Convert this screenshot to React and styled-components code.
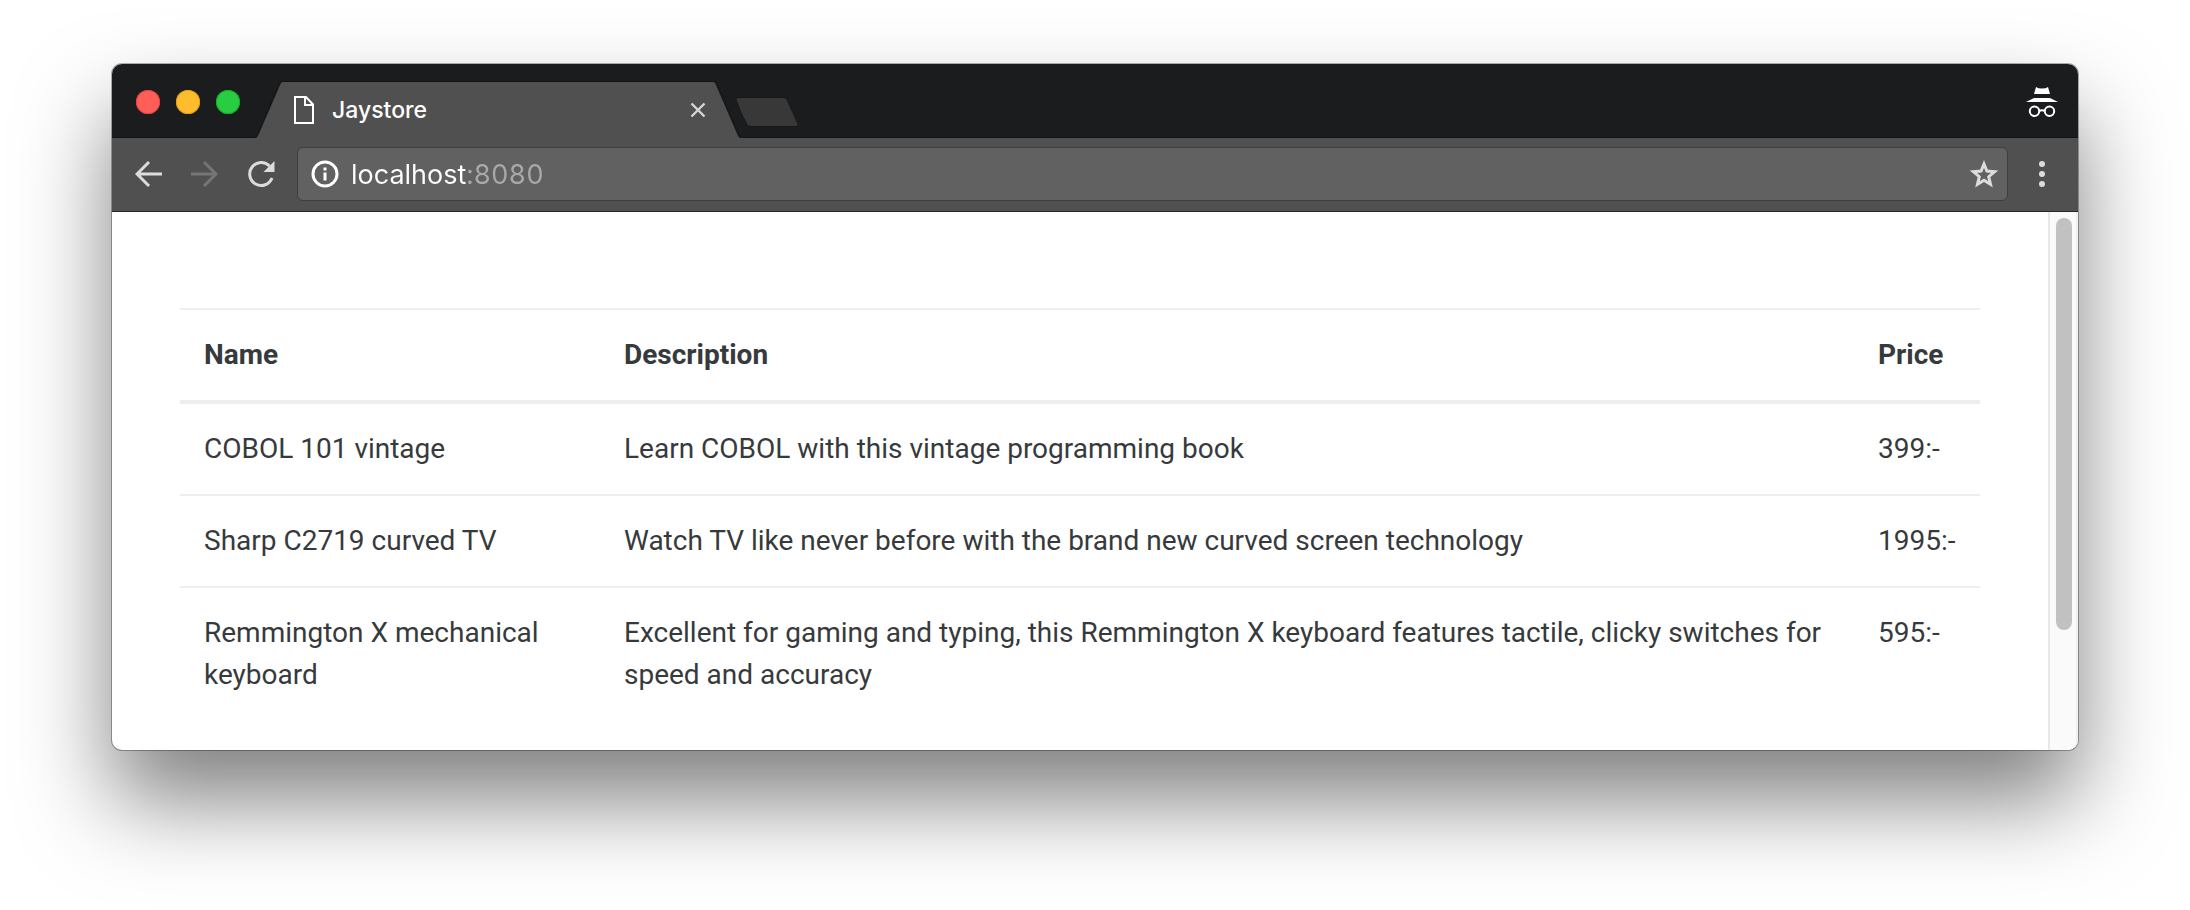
import React from "react";
import styled, { createGlobalStyle } from "styled-components";

const GlobalStyle = createGlobalStyle`
  * { box-sizing: border-box; }
  body { margin: 0; background: #fff; }
  button { border: 0; padding: 0; background: none; font: inherit; color: inherit; cursor: pointer; }
  svg { display: block; }
`;

const Desktop = styled.main`
  padding: 64px 112px 160px;
`;

const Window = styled.section`
  border-radius: 10px;
  background: #fff;
  box-shadow: 0 0 0 1px rgba(0, 0, 0, 0.3), 0 50px 90px rgba(0, 0, 0, 0.5);
`;

const TabStrip = styled.header`
  display: flex;
  align-items: flex-end;
  height: 74px;
  padding: 0 20px 0 24px;
  border-radius: 10px 10px 0 0;
  background: #1b1c1e;
  box-shadow: inset 0 -1px #141516;
`;

const WindowControls = styled.div`
  display: flex;
  align-self: flex-start;
  gap: 16px;
  margin: 26px 16px 0 0;
`;

const Light = styled.button`
  width: 24px;
  height: 24px;
  border-radius: 50%;
  background: ${(p) => p.$fill};
  box-shadow: inset 0 0 0 1px ${(p) => p.$edge};
`;

const Tab = styled.div`
  display: flex;
  flex: 0 1 484px;
  min-width: 0;
  height: 56px;
`;

const TabBody = styled.div`
  display: flex;
  flex: 1;
  align-items: center;
  min-width: 0;
  padding: 0 8px 0 12px;
  background: #505050;
  box-shadow: 0 -1px #141516;
`;

const TabTitle = styled.button`
  display: flex;
  flex: 1;
  align-items: center;
  gap: 18px;
  color: #fff;
  font-family: Inter, "Liberation Sans", sans-serif;
  font-size: 23px;
  font-weight: 500;
  line-height: 28px;
`;

const NewTab = styled.button`
  margin: 0 auto 11px -5px;
`;

const Toolbar = styled.nav`
  display: flex;
  align-items: center;
  gap: 22px;
  height: 74px;
  padding: 0 24px 1px 23px;
  border-bottom: 1px solid #282828;
  background: #505050;
`;

const NavButtons = styled.div`
  display: flex;
  gap: 28px;
`;

const AddressBar = styled.form`
  display: flex;
  flex: 1;
  align-items: center;
  gap: 12px;
  min-width: 0;
  height: 54px;
  padding: 0 8px 0 13px;
  border: 1px solid #3e3e3e;
  border-radius: 6px;
  background: #616161;
`;

/* Host name in white, port in grey. */
const AddressInput = styled.input`
  flex: 1;
  min-width: 0;
  height: 40px;
  padding: 0;
  border: 0;
  outline: 0;
  background: linear-gradient(90deg, #fff 116px, #a9a9a9 116px);
  background-clip: text;
  color: transparent;
  font-family: Inter, "Liberation Sans", sans-serif;
  font-size: 27px;
  font-variant-numeric: tabular-nums;
`;

const Viewport = styled.div`
  display: flex;
`;

const Page = styled.div`
  flex: 1;
  min-width: 0;
  padding: 96px 68px 30px;
`;

const Scrollbar = styled.div`
  width: 30px;
  padding: 6px 4px 0 6px;
  border-left: 2px solid #e8e8e8;
  border-right: 2px solid #f0f0f0;
  border-bottom-right-radius: 10px;
  background: #fafafa;
`;

const Thumb = styled.div`
  width: 16px;
  height: 412px;
  border-radius: 8px;
  background: #c1c1c1;
`;

const Table = styled.table`
  width: 100%;
  border-collapse: collapse;
  color: #373a3c;
  font-family: Roboto, "Liberation Sans", sans-serif;
  font-size: 28px;
  line-height: 42px;
  text-align: left;
`;

const Row = styled.tr`
  border-top: 2px solid #eceeef;
`;

const Cell = styled.td`
  width: ${(p) => p.$width || "auto"};
  padding: 24px;
  vertical-align: top;
`;

const HeadCell = styled(Cell)`
  border-bottom: 4px solid #eceeef;
  font-weight: 700;
`;

const products = [
  ["COBOL 101 vintage", "Learn COBOL with this vintage programming book", "399:-"],
  ["Sharp C2719 curved TV", "Watch TV like never before with the brand new curved screen technology", "1995:-"],
  [
    "Remmington X mechanical keyboard",
    "Excellent for gaming and typing, this Remmington X keyboard features tactile, clicky switches for speed and accuracy",
    "595:-",
  ],
];

const TabEdge = ({ right }) => (
  <svg width="26" height="56" viewBox="0 0 26 56" overflow="visible" aria-hidden="true">
    <g transform={right ? "translate(26 0) scale(-1 1)" : undefined}>
      <path d="M-1 56Q1 56 2 54L24.500 2Q25.500 0 27 0V56Z" fill="#505050" />
      <path d="M-2 55.500Q0 55.500 1 53.500L23.500 1.500Q24.500 -.5 26 -.5" fill="none" stroke="#141516" />
    </g>
  </svg>
);

const FileIcon = () => (
  <svg width="20" height="28" viewBox="0 0 20 28" fill="none" stroke="#fff" strokeWidth="2" aria-hidden="true">
    <path d="M1 1H12L19 8.500V27H1Z" />
    <path d="M11 1V9H19" />
  </svg>
);

const CloseIcon = () => (
  <svg width="16" height="16" viewBox="0 0 16 16" stroke="#d6d6d6" strokeWidth="2.400">
    <path d="M1.500 1.500L14.500 14.500M14.500 1.500L1.500 14.500" />
  </svg>
);

const NewTabShape = () => (
  <svg width="64" height="30" viewBox="0 0 64 30">
    <path d="M3 .5H48Q51 .5 52 2.500L63 27Q64 29.500 61 29.500H16Q13 29.500 12 27.500Q6 17 1 3Q0 .5 3 .5Z" fill="#383838" stroke="#161718" />
  </svg>
);

const IncognitoIcon = () => (
  <svg width="32" height="30" viewBox="0 0 32 30" role="img" aria-label="Incognito">
    <path d="M10 0Q12 1.500 16 1.500T22 0L24 7H8Z" fill="#fff" />
    <path d="M8 11H24L32 15H0Z" fill="#fff" />
    <g fill="none" stroke="#fff" strokeWidth="2">
      <circle cx="8.500" cy="24.300" r="4.700" />
      <circle cx="23.500" cy="24.300" r="4.700" />
      <path d="M13 24Q16 22.500 19 24" />
    </g>
  </svg>
);

const ArrowIcon = ({ forward }) => (
  <svg width="28" height="28" viewBox="0 0 28 28" fill="none" stroke={forward ? "#757575" : "#dcdcdc"} strokeWidth="3">
    <path d={forward ? "M0 14H25M13 2L25 14L13 26" : "M27 14H2M14 2L2 14L14 26"} />
  </svg>
);

const ReloadIcon = () => (
  <svg width="28" height="28" viewBox="0 0 28 28">
    <path d="M25 18A11.500 11.500 0 1 1 22.500 6" fill="none" stroke="#dcdcdc" strokeWidth="3" />
    <path d="M27.500 1V12H16.500Z" fill="#dcdcdc" />
  </svg>
);

const InfoIcon = () => (
  <svg width="28" height="28" viewBox="0 0 28 28" aria-hidden="true">
    <circle cx="14" cy="14" r="12" fill="none" stroke="#fff" strokeWidth="3" />
    <path d="M12.500 7.500H15.500V10.500H12.500ZM12.500 12.500H15.500V20.500H12.500Z" fill="#fff" />
  </svg>
);

const StarIcon = () => (
  <svg width="30" height="28" viewBox="0 0 30 28">
    <path
      d="M15 4L17.900 11L25.600 11.700L19.700 16.700L21.500 24.200L15 20.200L8.500 24.200L10.300 16.700L4.400 11.700L12.100 11Z"
      fill="none"
      stroke="#dcdcdc"
      strokeWidth="3"
    />
  </svg>
);

const MoreIcon = () => (
  <svg width="24" height="28" viewBox="0 0 24 28" fill="#dcdcdc">
    <circle cx="12" cy="4" r="3" />
    <circle cx="12" cy="14" r="3" />
    <circle cx="12" cy="24" r="3" />
  </svg>
);

const IncognitoBadge = styled.div`
  margin-bottom: 21px;
`;

export default function App() {
  return (
    <>
      <GlobalStyle />
      <Desktop>
        <Window aria-label="Browser window">
          <TabStrip>
            <WindowControls>
              <Light aria-label="Close window" $fill="#ff5f58" $edge="#e2463f" />
              <Light aria-label="Minimize window" $fill="#ffbd2e" $edge="#e1a116" />
              <Light aria-label="Zoom window" $fill="#28cd41" $edge="#14ae28" />
            </WindowControls>
            <Tab>
              <TabEdge />
              <TabBody>
                <TabTitle>
                  <FileIcon />
                  <span>Jaystore</span>
                </TabTitle>
                <button aria-label="Close tab">
                  <CloseIcon />
                </button>
              </TabBody>
              <TabEdge right />
            </Tab>
            <NewTab aria-label="New tab">
              <NewTabShape />
            </NewTab>
            <IncognitoBadge>
              <IncognitoIcon />
            </IncognitoBadge>
          </TabStrip>
          <Toolbar aria-label="Navigation">
            <NavButtons>
              <button aria-label="Back">
                <ArrowIcon />
              </button>
              <button aria-label="Forward" disabled>
                <ArrowIcon forward />
              </button>
              <button aria-label="Reload">
                <ReloadIcon />
              </button>
            </NavButtons>
            <AddressBar onSubmit={(e) => e.preventDefault()}>
              <InfoIcon />
              <AddressInput aria-label="Address" type="text" defaultValue="localhost:8080" spellCheck={false} />
              <button type="button" aria-label="Bookmark this page">
                <StarIcon />
              </button>
            </AddressBar>
            <button aria-label="Menu">
              <MoreIcon />
            </button>
          </Toolbar>
          <Viewport>
            <Page>
              <Table>
                <thead>
                  <Row>
                    <HeadCell as="th" scope="col" $width="420px">Name</HeadCell>
                    <HeadCell as="th" scope="col">Description</HeadCell>
                    <HeadCell as="th" scope="col" $width="126px">Price</HeadCell>
                  </Row>
                </thead>
                <tbody>
                  {products.map(([name, description, price]) => (
                    <Row key={name}>
                      <Cell>{name}</Cell>
                      <Cell>{description}</Cell>
                      <Cell>{price}</Cell>
                    </Row>
                  ))}
                </tbody>
              </Table>
            </Page>
            <Scrollbar aria-hidden="true">
              <Thumb />
            </Scrollbar>
          </Viewport>
        </Window>
      </Desktop>
    </>
  );
}
